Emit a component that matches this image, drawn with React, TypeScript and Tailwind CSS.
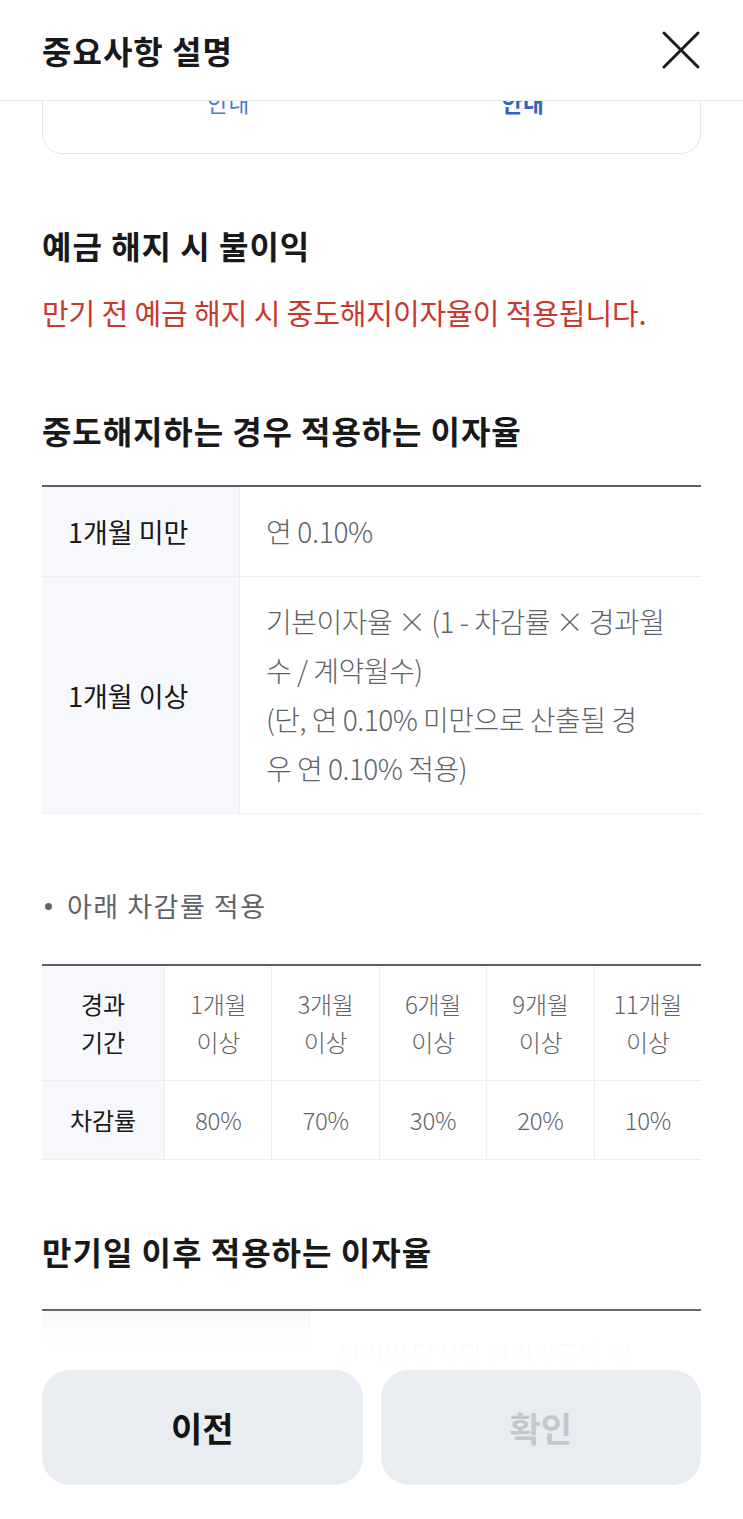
const periods = [
  { label: '1개월', rate: '80%' },
  { label: '3개월', rate: '70%' },
  { label: '6개월', rate: '30%' },
  { label: '9개월', rate: '20%' },
  { label: '11개월', rate: '10%' },
];

function CloseIcon() {
  return (
    <svg className="w-[40px] h-[40px] text-[#1b1b1b]" viewBox="0 0 40 40" fill="none" stroke="currentColor">
      <path strokeLinecap="round" strokeWidth={3} d="M3 3l34 34M37 3L3 37" />
    </svg>
  );
}

export default function App() {
  return (
    <div className="h-[1519px] w-full flex flex-col overflow-hidden bg-white font-['Noto_Sans_CJK_KR','Noto_Sans',sans-serif] text-[#191919]">
      {/* Header */}
      <header className="h-[101px] flex-shrink-0 flex items-center justify-between pl-[42px] pr-[42px] border-b border-[#e6e9ee] bg-white relative z-10">
        <h1 className="text-[32px] font-semibold tracking-[1px]">중요사항 설명</h1>
        <CloseIcon />
      </header>

      {/* Scrolling content */}
      <main className="flex-1 overflow-hidden px-[42px]">
        {/* Card (scrolled up) */}
        <div className="mt-[-40px] rounded-[20px] border border-[#e3e6ea] pt-[26px] pb-[37px] pl-[38px] pr-[30px] grid grid-cols-2">
          <div className="text-center text-[23px] leading-[28px] text-[#4a7dd2]">안내</div>
          <div className="text-center text-[23px] leading-[28px] font-semibold text-[#2f66c4]">안내</div>
        </div>

        <h2 className="mt-[71px] text-[32px] leading-[40px] font-bold tracking-[1px]">예금 해지 시 불이익</h2>
        <p className="mt-[27px] text-[29px] leading-[40px] text-[#c9382e] tracking-[-0.1px]">
          만기 전 예금 해지 시 중도해지이자율이 적용됩니다.
        </p>

        <h2 className="mt-[78px] text-[32px] leading-[40px] font-bold tracking-[0.9px]">중도해지하는 경우 적용하는 이자율</h2>

        {/* Table 1 */}
        <div className="mt-[35px] border-t-2 border-[#5c5f63]">
          <div className="flex border-b border-[#eceef1]">
            <div className="w-[198px] flex-shrink-0 bg-[#f6f8fb] border-r border-[#eceef1] pl-[26px] py-[20px] flex items-center text-[27px] leading-[49px]">
              1개월 미만
            </div>
            <div className="flex-1 pl-[26px] py-[20px] text-[28px] leading-[49px] font-light text-[#5f6368] tracking-[-0.3px]">
              연 0.10%
            </div>
          </div>
          <div className="flex border-b border-[#eceef1]">
            <div className="w-[198px] flex-shrink-0 bg-[#f6f8fb] border-r border-[#eceef1] pl-[26px] py-[20px] flex items-center text-[27px] leading-[49px]">
              1개월 이상
            </div>
            <div className="flex-1 pl-[26px] py-[20px] text-[28px] leading-[49px] font-light text-[#5f6368] tracking-[-0.5px] whitespace-nowrap">
              <div>기본이자율 × (1 - 차감률 × 경과월</div>
              <div>수 / 계약월수)</div>
              <div>(단, 연 0.10% 미만으로 산출될 경</div>
              <div>우 연 0.10% 적용)</div>
            </div>
          </div>
        </div>

        {/* Bullet */}
        <div className="mt-[72px] flex items-center text-[27px] leading-[40px] text-[#5f6368] tracking-[1.5px]">
          <span className="w-[7px] h-[7px] rounded-full bg-[#5f6368] ml-[3px] mr-[15px]" />
          아래 차감률 적용
        </div>

        {/* Table 2 */}
        <div className="mt-[38px] border-t-2 border-[#5c5f63]">
          <div className="flex border-b border-[#eceef1]">
            <div className="w-[123px] flex-shrink-0 bg-[#f6f8fb] border-r border-[#eceef1] py-[19px] text-center text-[24px] leading-[38px]">
              경과<br />기간
            </div>
            {periods.map((p, i) => (
              <div
                key={p.label}
                className={`flex-1 py-[19px] text-center text-[24px] leading-[38px] font-light text-[#5f6368] tracking-[-0.3px] ${i < periods.length - 1 ? 'border-r border-[#eceef1]' : ''}`}
              >
                {p.label}<br />이상
              </div>
            ))}
          </div>
          <div className="flex border-b border-[#eceef1]">
            <div className="w-[123px] flex-shrink-0 bg-[#f6f8fb] border-r border-[#eceef1] py-[20px] text-center text-[24px] leading-[38px]">
              차감률
            </div>
            {periods.map((p, i) => (
              <div
                key={p.rate}
                className={`flex-1 py-[20px] text-center text-[24px] leading-[38px] font-light text-[#5f6368] tracking-[-0.3px] ${i < periods.length - 1 ? 'border-r border-[#eceef1]' : ''}`}
              >
                {p.rate}
              </div>
            ))}
          </div>
        </div>

        <h2 className="mt-[71px] text-[32px] leading-[40px] font-bold tracking-[1px]">만기일 이후 적용하는 이자율</h2>

        {/* Table 3 (faded under the footer) */}
        <div className="mt-[38px] border-t-2 border-[#5c5f63] flex">
          <div className="w-[268px] flex-shrink-0 h-[200px] bg-[#f6f8fb] border-r border-[#eceef1]" />
          <div className="flex-1 pl-[28px] pt-[22px] text-[25px] leading-[40px] font-light text-[#5f6368] whitespace-nowrap">
            만기일 당시의 만기지급에 대
          </div>
        </div>
      </main>

      {/* Footer */}
      <footer className="relative flex-shrink-0 bg-white px-[42px] pb-[34px]">
        <div className="absolute left-0 right-0 bottom-full h-[62px] bg-gradient-to-t from-white via-white/95 to-white/0" />
        <div className="flex gap-[18px]">
          <button className="flex-1 h-[115px] rounded-[28px] bg-[#e9edf2] text-[34px] font-bold text-[#141414]">이전</button>
          <button className="flex-1 h-[115px] rounded-[28px] bg-[#e9edf2] text-[34px] font-bold text-[#c3c7ce]">확인</button>
        </div>
      </footer>
    </div>
  );
}
